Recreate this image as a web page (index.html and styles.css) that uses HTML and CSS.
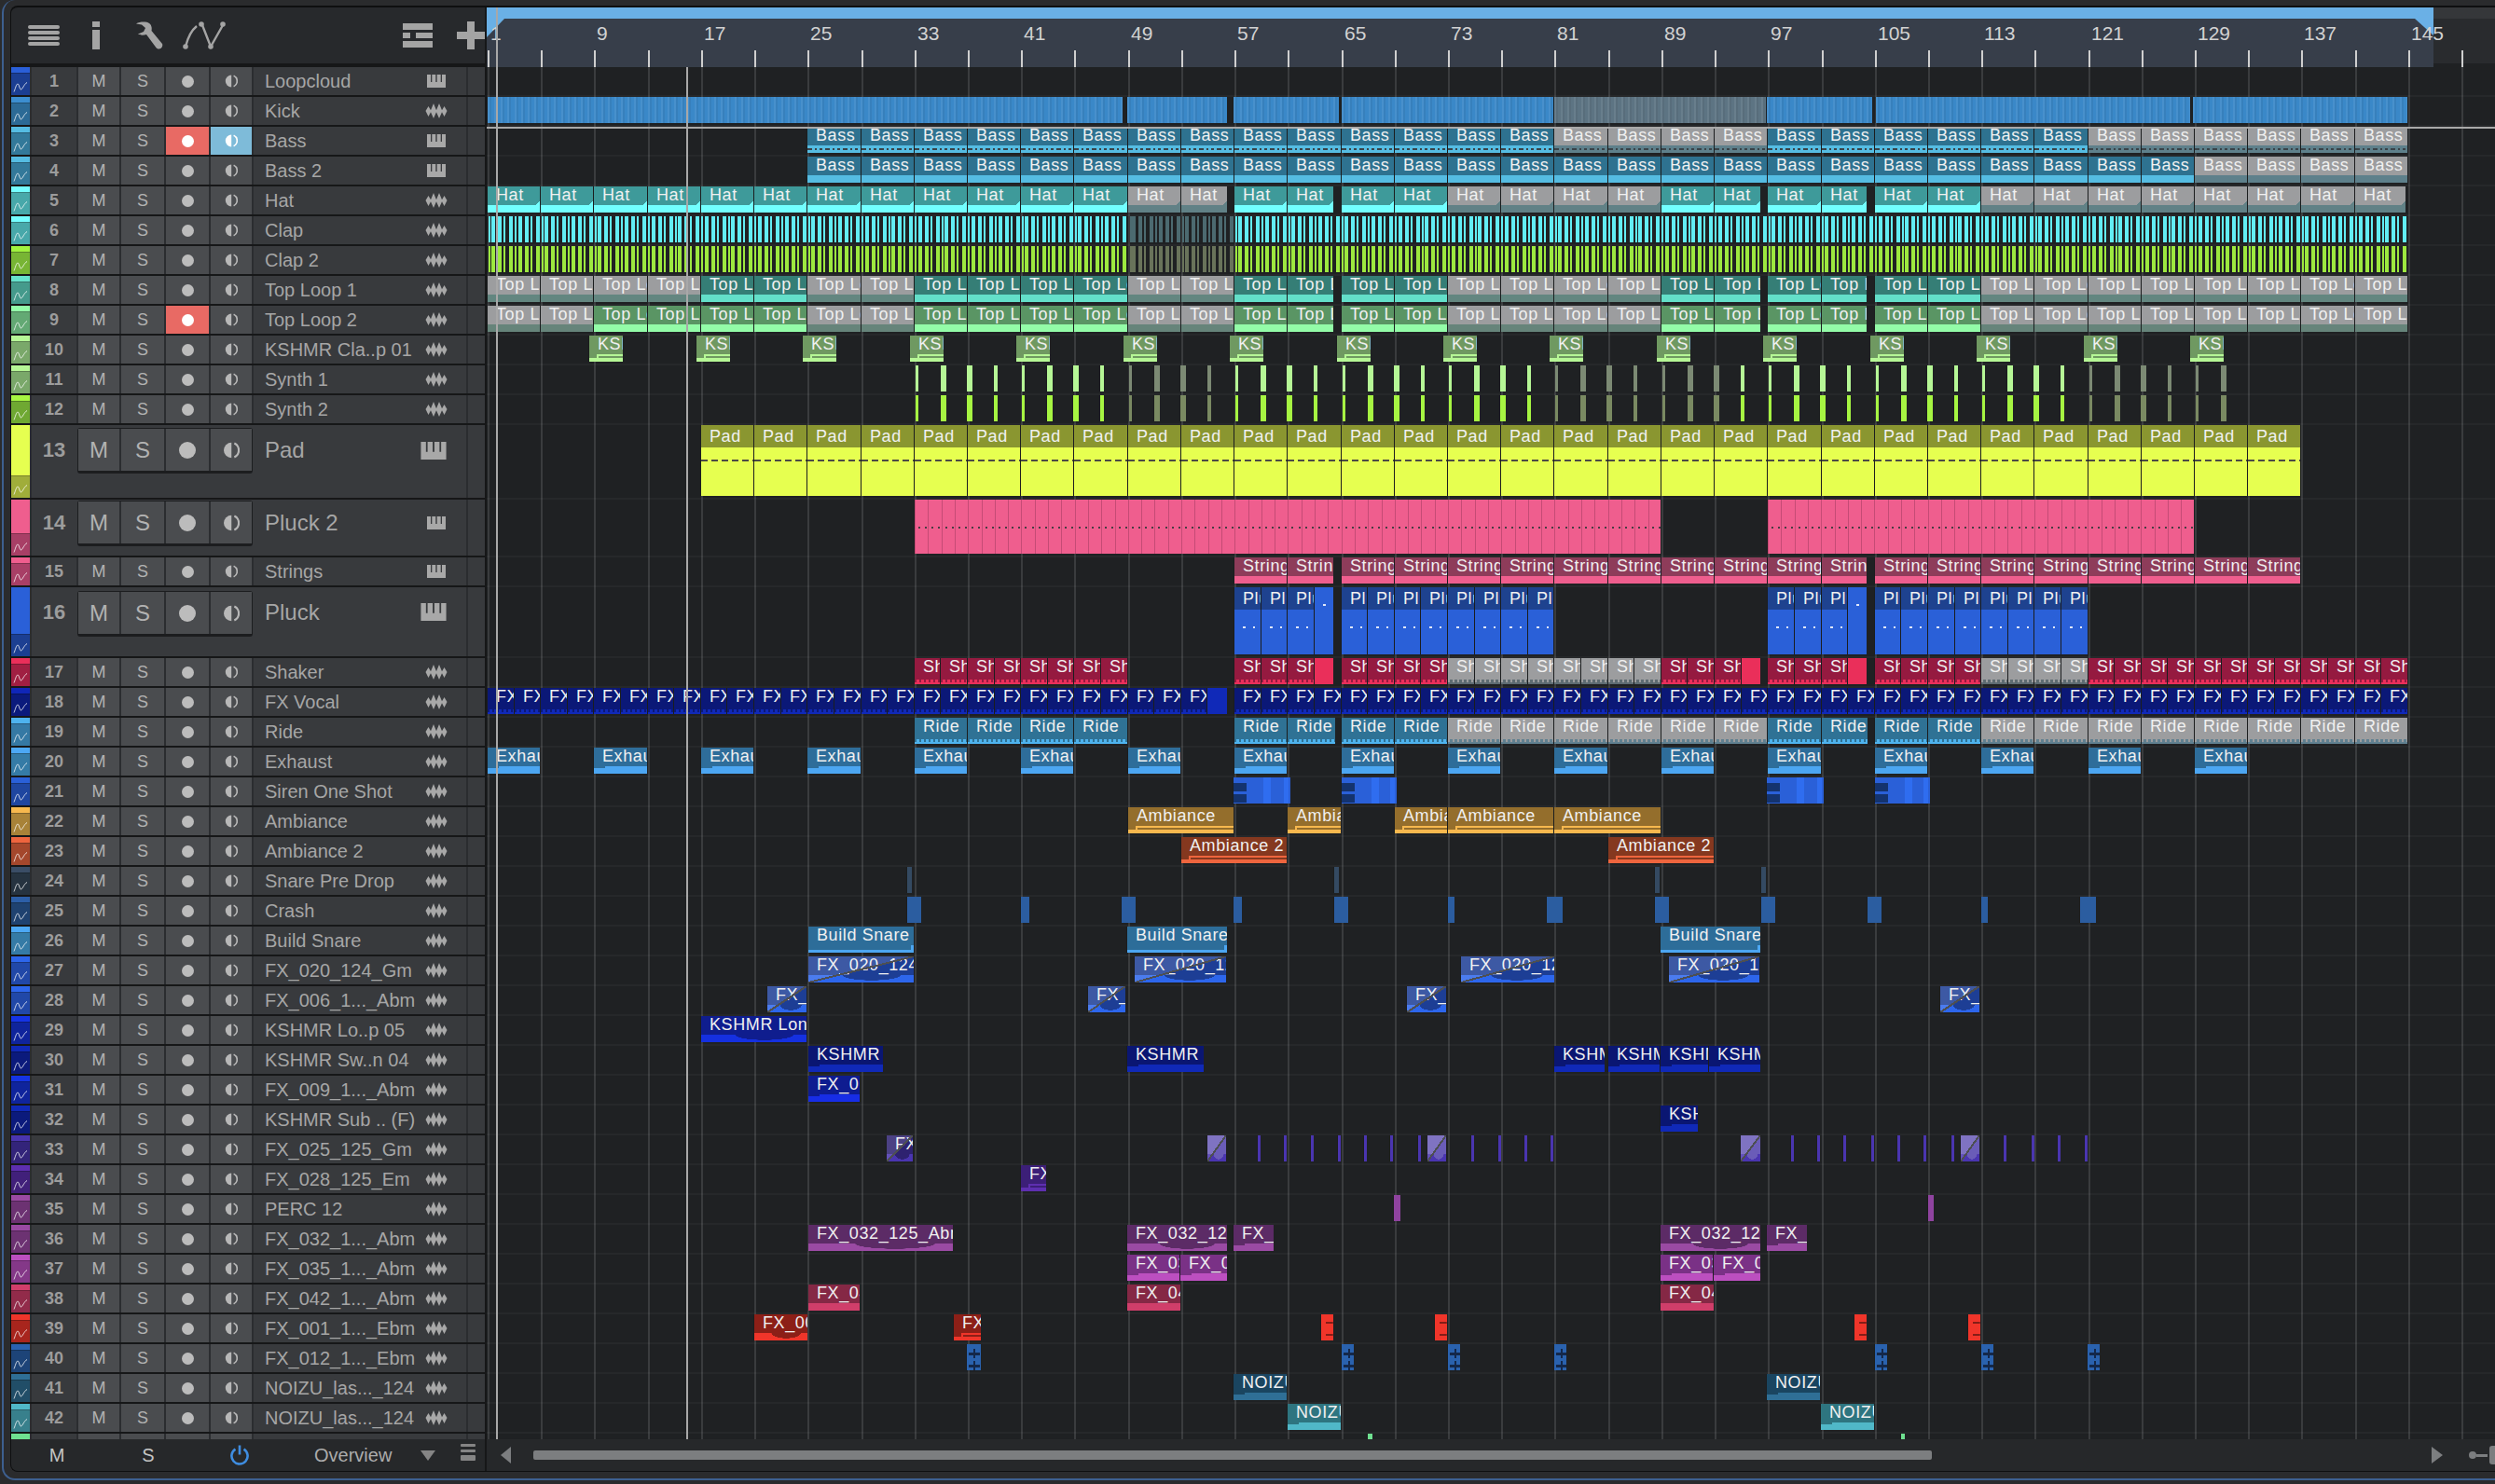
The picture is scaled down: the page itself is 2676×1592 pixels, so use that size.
FILE: index.html
```html
<!DOCTYPE html>
<html lang="en">
<head>
<meta charset="UTF-8">
<title>Arrangement</title>
<link rel="stylesheet" href="styles.css">
</head>
<body>
    <svg class="sprite" width="0" height="0">
        <symbol id="piano" viewBox="0 0 20 14">
            <path d="M0 0h4v8h1.3V0h4v8h1.4V0h4v8H16V0h4v14H0z"/>
        </symbol>
        <symbol id="wave" viewBox="0 0 24 16">
            <path d="M0.5 8L3.5 3L6 7.2L9 0L12 7.2L15 0L18 7.2L20.5 3L23.5 8L20.5 14L18 9.2L15 16L12 9.2L9 16L6 9.2L3.5 14Z"/>
        </symbol>
        <symbol id="zig" viewBox="0 0 16 12">
            <path d="M1 11.5C2.5 8 3.5 3 5 3C6.5 3 7 9 8.5 9C10 9 12 3 15 1.5" fill="none" stroke="currentColor" stroke-width="1"/>
        </symbol>
        <symbol id="monitor" viewBox="0 0 14 14">
            <path d="M7.2 0.6A6.4 6.4 0 0 0 7.2 13.4Z"/>
            <path d="M9.6 1.2A6.4 6.4 0 0 1 9.6 12.8" fill="none" stroke="currentColor" stroke-width="1.7"/>
        </symbol>
    </svg>

    <div class="window">
        <div class="arrange">
            <aside class="track-panel">
                <header class="toolbar">
                    <svg class="tool tool-menu" viewBox="0 0 34 22"><rect y="0" width="34" height="4" rx="2"/><rect y="6" width="34" height="4" rx="2"/><rect y="12" width="34" height="4" rx="2"/><rect y="18" width="34" height="4" rx="2"/></svg>
                    <svg class="tool tool-info" viewBox="0 0 8 30"><rect width="8" height="6"/><rect y="9" width="8" height="21"/></svg>
                    <svg class="tool tool-wrench" viewBox="0 0 30 30"><path d="M1 2.5C5 0 12 0 15 2C18 4 18 8 17.5 10L29 24C30 26 28.5 29.5 25.5 29.5C24 29.5 23 29 22 27.5L12 14C9 15 5 15 3 13.5L9 11L11 7L7 3.5Z"/></svg>
                    <svg class="tool tool-auto" viewBox="0 0 46 30"><path d="M3 27C6 15 10 9 15 5" fill="none" stroke="currentColor" stroke-width="2.4"/><path d="M21 4L30 27L43 4" fill="none" stroke="currentColor" stroke-width="2.4"/><circle cx="3" cy="27" r="2.8"/><circle cx="20" cy="3" r="2.8"/><circle cx="30" cy="27" r="2.8"/><circle cx="43" cy="3" r="2.8"/></svg>
                    <div class="toolbar-right">
                        <svg class="tool tool-list" viewBox="0 0 32 26"><rect width="32" height="7"/><rect y="10" width="8" height="6"/><rect x="14" y="10" width="18" height="6"/><rect y="19" width="32" height="7"/></svg>
                        <svg class="tool tool-plus" viewBox="0 0 30 30"><rect y="11" width="30" height="8"/><rect x="11" width="8" height="30"/></svg>
                    </div>
                </header>
                <div class="track-list" id="trackList"></div>
                <footer class="panel-foot">
                    <span class="foot-cell foot-m">M</span>
                    <span class="foot-cell foot-s">S</span>
                    <span class="foot-cell foot-power">
                        <svg viewBox="0 0 22 22" width="22" height="22"><path d="M6.5 4.6A8.6 8.6 0 1 0 15.5 4.6" fill="none" stroke="#3f8de0" stroke-width="2.6"/><rect x="9.7" y="0.5" width="2.6" height="10" fill="#3f8de0"/></svg>
                    </span>
                    <span class="foot-overview">Overview</span>
                    <span class="foot-arrow"></span>
                    <svg class="foot-list" viewBox="0 0 16 18"><rect width="16" height="3" rx="1"/><rect y="6" width="16" height="3" rx="1"/><rect y="12" width="16" height="6" rx="1"/></svg>
                </footer>
            </aside>

            <main class="timeline">
                <div class="ruler" id="ruler">
                    <div class="loop-range"></div>
                </div>
                <div class="lanes" id="lanes"></div>
                <footer class="scroll-foot">
                    <span class="arrow arrow-left"></span>
                    <div class="scroll-track"><div class="scroll-thumb"></div></div>
                    <span class="arrow arrow-right"></span>
                    <div class="zoom-slider">
                        <span class="zoom-dot"></span>
                        <span class="zoom-line"></span>
                        <span class="zoom-grip"></span>
                        <span class="zoom-line zoom-line-long"></span>
                    </div>
                </footer>
                <div class="locator locator-left"></div>
                <div class="locator locator-right"></div>
            </main>
        </div>
    </div>

    <script src="script.js"></script>
</body>
</html>
```

FILE: styles.css
```css
* {
    box-sizing: border-box;
}

html, body {
    margin: 0;
    padding: 0;
}

body {
    width: 2676px;
    height: 1592px;
    overflow: hidden;
    background-color: #2a2b2d;
    font-family: "Liberation Sans", Arial, sans-serif;
}

.sprite {
    position: absolute;
}

.window {
    height: 1588px;
    margin-left: 2px;
    padding: 6px 0 7px 7px;
    border-left: 2px solid #3d5f8f;
    border-bottom: 2px solid #3d5f8f;
    border-radius: 14px 0 0 14px;
}

.arrange {
    display: grid;
    grid-template-columns: 510px 1fr;
    height: 1573px;
    border: 1px solid #0e0f10;
    border-top-width: 2px;
    border-right: 0;
    border-radius: 8px 0 0 8px;
    background-color: #161718;
    overflow: hidden;
}

/* left panel */
.track-panel {
    display: flex;
    flex-direction: column;
    width: 510px;
    padding-right: 2px;
}

.toolbar {
    display: flex;
    align-items: center;
    flex: none;
    height: 60px;
    margin-bottom: 4px;
    padding-left: 18px;
    background-color: #27292c;
}

.tool {
    display: block;
    flex: none;
    color: #a4a4a4;
    fill: #a4a4a4;
}

.tool-menu { width: 34px; height: 22px; margin-right: 35px; }
.tool-info { width: 8px; height: 30px; margin-right: 38px; }
.tool-wrench { width: 30px; height: 30px; margin-right: 21px; }
.tool-auto { width: 46px; height: 30px; }

.toolbar-right {
    display: flex;
    align-items: center;
    margin-left: auto;
    margin-right: 0;
}

.tool-list { width: 32px; height: 26px; margin-right: 26px; }
.tool-plus { width: 30px; height: 30px; }

.track-list {
    display: flex;
    flex-direction: column;
    gap: 2px;
    flex: none;
    height: 1472px;
    overflow: hidden;
}

.track {
    display: flex;
    gap: 2px;
    flex: none;
    height: 30px;
    background-color: #2b2d30;
    color: #a6a6a6;
}

.track-pad { height: 78px; --bright: 54px; --group-top: 4px; --center: 54px; }
.track-pluck2 { height: 60px; --bright: 36px; --group-top: 2px; --center: 50px; }
.track-pluck { height: 74px; --bright: 50px; --group-top: 5px; --center: 53px; }

.chip {
    display: flex;
    flex-direction: column;
    flex: none;
    width: 20px;
    background-color: var(--chip-dark);
    color: rgba(255, 255, 255, 0.75);
}

.chip-top {
    flex: none;
    height: var(--bright, 6px);
    margin-bottom: 1px;
    background-color: var(--chip-top);
    box-shadow: 0 1px 0 rgba(0, 0, 0, 0.25);
}

.chip svg {
    width: 16px;
    height: 12px;
    margin: auto 0 3px 2px;
}

.track-main {
    display: flex;
    gap: 2px;
    flex: none;
    width: 466px;
}

.track-num {
    display: flex;
    align-items: center;
    justify-content: center;
    flex: none;
    width: 48px;
    background-color: #383a3d;
    font-size: 18px;
    font-weight: bold;
    color: #9c9c9c;
}

.buttons {
    display: flex;
    gap: 2px;
    flex: none;
}

.btn {
    display: flex;
    align-items: center;
    justify-content: center;
    flex: none;
    width: 46px;
    background-color: #4a4c4f;
    font-size: 18px;
    color: #b2b2b2;
}

.btn-m, .btn-mon {
    width: 44px;
}

.btn-mon {
    color: #b8b8b8;
    fill: #b8b8b8;
}

.btn-mon svg {
    width: 14px;
    height: 14px;
}

.rec-dot {
    width: 13px;
    height: 13px;
    border-radius: 50%;
    background-color: #bcbcbc;
}

.btn-rec.on {
    background-color: #e86a64;
}

.btn-rec.on .rec-dot {
    background-color: #fff;
}

.btn-mon.on {
    background-color: #7ebbd9;
    color: #fff;
    fill: #fff;
}

.track-name {
    display: flex;
    align-items: center;
    flex: none;
    width: 228px;
    padding: 0 20px 0 12px;
    background-color: #383a3d;
    font-size: 20px;
    white-space: nowrap;
    overflow: hidden;
}

.track-name svg {
    flex: none;
    margin-left: auto;
    fill: #a8a8a8;
}

.icon-piano { width: 20px; height: 14px; margin-right: 2px; }
.icon-wave { width: 24px; height: 16px; }
.icon-piano-big { width: 34px; height: 19px; margin-right: -2px; }

.track-tail {
    flex: none;
    width: 18px;
    background-color: #383a3d;
}

/* tall tracks: numbers, buttons and name sit on one surface */
.track-tall .track-main {
    background-color: #383a3d;
    align-items: flex-start;
}

.track-tall .track-num,
.track-tall .track-name {
    height: var(--center);
}

.track-tall .track-num {
    font-size: 22px;
}

.track-tall .track-name {
    font-size: 24px;
}

.track-tall .buttons {
    height: 45px;
    margin-top: var(--group-top);
    border-radius: 2px;
    box-shadow: 0 0 0 1px #1c1d1f, 0 2px 0 1px #1c1d1f;
    background-color: #2b2d30;
}

.track-tall .btn {
    font-size: 24px;
}

.track-tall .rec-dot {
    width: 18px;
    height: 18px;
}

.track-tall .btn-mon svg {
    width: 18px;
    height: 18px;
}

.panel-foot {
    display: flex;
    align-items: center;
    flex: none;
    height: 34px;
    background-color: #26282a;
    color: #c4c4c4;
    font-size: 20px;
}

.foot-cell {
    display: flex;
    justify-content: center;
    flex: none;
    width: 98px;
}

.foot-m { margin-right: 0; }
.foot-s { width: 98px; }
.foot-power { width: 98px; }

.foot-overview {
    flex: none;
    margin-left: 31px;
    color: #acacac;
}

.foot-arrow {
    flex: none;
    width: 0;
    height: 0;
    margin-left: 31px;
    border-left: 8px solid transparent;
    border-right: 8px solid transparent;
    border-top: 11px solid #858585;
}

.foot-list {
    flex: none;
    width: 16px;
    height: 18px;
    margin: -6px 0 0 27px;
    fill: #858585;
}

/* timeline */
.timeline {
    position: relative;
    display: flex;
    flex-direction: column;
    min-width: 0;
}

.ruler {
    position: relative;
    flex: none;
    height: 64px;
    background: linear-gradient(#35373a 0 12px, #292b2e 12px 60px, #1f2123 60px);
    color: #d2d2d2;
    font-size: 21px;
}

.loop-range {
    position: absolute;
    left: 0;
    top: 0;
    bottom: 0;
    width: 2088px;
    border-top: 12px solid #6ab0e6;
    background-color: #373e4a;
}

.loop-range::before,
.loop-range::after {
    content: "";
    position: absolute;
    top: 0;
    background-color: #6ab0e6;
}

.loop-range::before {
    left: 0;
    width: 19px;
    height: 20px;
    clip-path: polygon(0 0, 100% 0, 0 100%);
}

.loop-range::after {
    right: 0;
    width: 20px;
    height: 18px;
    clip-path: polygon(0 0, 100% 0, 100% 100%);
}

.ruler-label {
    position: absolute;
    top: 16px;
    line-height: 24px;
}

.ruler-tick {
    position: absolute;
    top: 46px;
    width: 2px;
    height: 18px;
    background-color: #cfcfcf;
}

.lanes {
    position: relative;
    flex: none;
    height: 1472px;
    overflow: hidden;
    background-color: #1f2123;
}

.grid-line {
    position: absolute;
    top: 0;
    bottom: 0;
    width: 2px;
    background-color: #3a3c3e;
}

.lane {
    position: relative;
    height: 32px;
    border-bottom: 2px solid rgba(255, 255, 255, 0.035);
}

.lane-pad { height: 80px; }
.lane-pluck2 { height: 62px; }
.lane-pluck { height: 76px; }

.insert-line {
    position: absolute;
    left: 0;
    right: 0;
    top: 64px;
    height: 2px;
    background-color: #a9a9a9;
}

.locator {
    position: absolute;
    width: 2px;
    bottom: 34px;
    background-color: #a8a8a8;
    z-index: 5;
}

.locator-left { left: 10px; top: 0; }
.locator-right { left: 214px; top: 64px; }

/* clips */
.clip {
    position: absolute;
    top: 0;
    bottom: 2px;
    display: flex;
    flex-direction: column;
    overflow: hidden;
    border-left: 1px solid rgba(0, 0, 0, 0.12);
    color: #f0f0f0;
}

.clip-head {
    flex: none;
    height: 20px;
    padding-left: 9px;
    background-color: var(--head);
    font-size: 18px;
    line-height: 18px;
    letter-spacing: 0.6px;
    white-space: nowrap;
    overflow: hidden;
}

.lane-pad .clip-head,
.lane-pluck .clip-head {
    height: 24px;
    line-height: 24px;
}

.clip-body {
    position: relative;
    flex: 1;
    background-color: var(--body);
}

.clip-bare .clip-head {
    display: none;
}

.clip-note {
    position: absolute;
    top: 0;
    bottom: 2px;
    background-color: var(--body);
}

/* what is drawn inside a clip */
.kick .clip-body {
    background-image: repeating-linear-gradient(90deg, rgba(255, 255, 255, 0.07) 0 2px, rgba(0, 0, 0, 0.06) 2px 4px, transparent 4px 7.15px);
}

.bars .clip-body {
    background-color: transparent;
    background-image: repeating-linear-gradient(90deg, var(--body) 0 4px, transparent 4px 7px, var(--body) 7px 11px, transparent 11px 13px, var(--body) 13px 15px, transparent 15px 19px, var(--body) 19px 23px, transparent 23px 25px, var(--body) 25px 27px, transparent 27px 28.61px);
    background-position: 4px 0;
}

.hat .clip-head {
    background-image: linear-gradient(-45deg, var(--body) 0 3px, transparent 3px);
}

.wave-dash .clip-body {
    background-image: repeating-linear-gradient(90deg, #3a4248 0 5px, transparent 5px 8px, #3a4248 8px 10px, transparent 10px 13px, #3a4248 13px 16px, transparent 16px 19px);
    background-size: 100% 2px;
    background-position: 0 3px;
    background-repeat: no-repeat;
}

.wave-pad .clip-body {
    background-image: repeating-linear-gradient(90deg, #4b4b44 0 7px, transparent 7px 11px);
    background-size: 100% 2px;
    background-position: 0 13px;
    background-repeat: no-repeat;
}

.wave-dots .clip-body {
    background-image:
        repeating-linear-gradient(90deg, #4a3d43 0 2px, transparent 2px 7.15px),
        repeating-linear-gradient(90deg, rgba(100, 30, 60, 0.3) 0 1px, transparent 1px 14.3px);
    background-size: 100% 2px, 100% 100%;
    background-position: 4px 29px, 0 0;
    background-repeat: no-repeat;
}

.wave-white .clip-body {
    background-image: repeating-linear-gradient(90deg, rgba(255, 255, 255, 0.85) 0 3px, transparent 3px 11px, rgba(255, 255, 255, 0.85) 11px 13px, transparent 13px 22px);
    background-size: 100% 2px;
    background-position: 9px 18px;
    background-repeat: no-repeat;
}

.wave-teeth .clip-body {
    background-image:
        linear-gradient(var(--head), var(--head)),
        repeating-linear-gradient(90deg, var(--head) 0 2px, transparent 2px 5px);
    background-size: 100% 3px, 100% 3px;
    background-position: 0 0, 0 3px;
    background-repeat: no-repeat;
}

.wave-band .clip-body {
    background-image: linear-gradient(var(--head), var(--head));
    background-size: calc(100% - 3px) 5px;
    background-repeat: no-repeat;
}

.wave-line .clip-body {
    background-image:
        linear-gradient(var(--head), var(--head)),
        linear-gradient(var(--head), var(--head));
    background-size: 8px 4px, 100% 2px;
    background-position: 0 0, 10px 2px;
    background-repeat: no-repeat;
}

.wave-hump .clip-body {
    background-image: radial-gradient(ellipse 34% 100% at 60% 0, var(--head) 0 80%, transparent 82%);
    background-size: 100% 7px;
    background-repeat: no-repeat;
}

.wave-corner .clip-body {
    background-image: linear-gradient(var(--head), var(--head));
    background-size: 12px 2px;
    background-repeat: no-repeat;
}

.wave-steps .clip-body {
    background-image:
        linear-gradient(rgba(0, 0, 0, 0.45), rgba(0, 0, 0, 0.45)),
        linear-gradient(rgba(0, 0, 0, 0.45), rgba(0, 0, 0, 0.45));
    background-size: 60% 2px, 60% 2px;
    background-position: 100% 8px, 100% 21px;
    background-repeat: no-repeat;
}

.wave-tree .clip-body {
    background-image:
        linear-gradient(#14284a, #14284a),
        linear-gradient(#14284a, #14284a),
        linear-gradient(#14284a, #14284a),
        linear-gradient(#14284a, #14284a);
    background-size: 2px 10px, 12px 3px, 2px 10px, 12px 3px;
    background-position: 7px 5px, 2px 9px, 7px 18px, 2px 22px;
    background-repeat: no-repeat;
}

.siren .clip-body {
    background-image:
        linear-gradient(#14336e, #14336e),
        linear-gradient(#14336e, #14336e),
        linear-gradient(#2f6df0, #2f6df0),
        linear-gradient(#2f6df0, #2f6df0);
    background-size: 14px 9px, 14px 9px, 8px 100%, 5px 100%;
    background-position: 0 6px, 0 18px, 32px 0, calc(100% - 2px) 0;
    background-repeat: no-repeat;
}

.fade::after {
    content: "";
    position: absolute;
    inset: 0;
    background: linear-gradient(to bottom right, rgba(255, 255, 255, 0.14) 0 calc(50% - 1px), #4d4f52 calc(50% - 1px) calc(50% + 1px), transparent calc(50% + 1px));
}

/* footer of the timeline */
.scroll-foot {
    display: flex;
    align-items: center;
    flex: none;
    height: 34px;
    padding-left: 15px;
    background-color: #26282a;
}

.arrow {
    flex: none;
    width: 0;
    height: 0;
    border-top: 9px solid transparent;
    border-bottom: 9px solid transparent;
}

.arrow-left {
    border-right: 11px solid #7c7e80;
}

.arrow-right {
    margin-left: 6px;
    border-left: 12px solid #7c7e80;
}

.scroll-track {
    flex: none;
    width: 2030px;
    margin-left: 24px;
}

.scroll-thumb {
    width: 1500px;
    height: 10px;
    border-radius: 2px;
    background-color: #7c7e80;
}

.zoom-slider {
    display: flex;
    align-items: center;
    flex: none;
    margin-left: 28px;
}

.zoom-dot {
    flex: none;
    width: 8px;
    height: 8px;
    border-radius: 50%;
    background-color: #7c7e80;
}

.zoom-line {
    flex: none;
    width: 12px;
    height: 3px;
    background-color: #7c7e80;
}

.zoom-line-long {
    width: 30px;
}

.zoom-grip {
    flex: none;
    width: 8px;
    height: 20px;
    margin: 0 2px;
    border-radius: 3px;
    background-color: #7c7e80;
}
```

FILE: script.js
```js
const SLOT = 57.22; // 4 bars
const LEFT = 522;
const s = k => LEFT + Math.round(k * SLOT);

const PIANO = 'piano', WAVE = 'wave';

const tracks = [
    { name: 'Loopcloud', icon: PIANO, top: '#2a5fd8', dark: '#1b3e92' },
    { name: 'Kick', icon: WAVE, top: '#3c8ed0', dark: '#2c6a96', body: '#3a88c8', mbody: '#5d7483' },
    { name: 'Bass', icon: PIANO, top: '#55bce2', dark: '#33799a', head: '#2e7290', body: '#55bce2', mbody: '#5e808b', rec: true, mon: true },
    { name: 'Bass 2', icon: PIANO, top: '#55bce2', dark: '#33799a', head: '#2e7290', body: '#55bce2', mbody: '#5e808b' },
    { name: 'Hat', icon: WAVE, top: '#74fdff', dark: '#48a8aa', head: '#3e9a9a', body: '#72ffff', mbody: '#618186' },
    { name: 'Clap', icon: WAVE, top: '#74fdff', dark: '#48a8aa', body: '#62edf4', mbody: '#4c6a70' },
    { name: 'Clap 2', icon: WAVE, top: '#a1f23f', dark: '#78b534', body: '#9de83f', mbody: '#69735a' },
    { name: 'Top Loop 1', icon: WAVE, top: '#66e2cc', dark: '#459a8c', head: '#357e76', body: '#63dfc9', mbody: '#638680' },
    { name: 'Top Loop 2', icon: WAVE, top: '#93fca8', dark: '#63a974', head: '#5a9564', body: '#93fca8', mbody: '#66847a', rec: true },
    { name: 'KSHMR Cla..p 01', icon: WAVE, top: '#b6f796', dark: '#7aa86a', head: '#6f9961', body: '#b6f796' },
    { name: 'Synth 1', icon: WAVE, top: '#b6f796', dark: '#7aa86a', body: '#b6f796', mbody: '#7c8a74' },
    { name: 'Synth 2', icon: WAVE, top: '#a6f542', dark: '#6fa832', body: '#a6f542', mbody: '#7a8a62' },
    { name: 'Pad', icon: 'piano-big', top: '#e6ff50', dark: '#a0ad3a', head: '#8a9630', body: '#e6ff50', tall: 'pad' },
    { name: 'Pluck 2', icon: PIANO, top: '#ef5e8e', dark: '#a83f66', body: '#ef5e8e', tall: 'pluck2' },
    { name: 'Strings', icon: PIANO, top: '#ef5e8e', dark: '#a83f66', head: '#8e3c5a', body: '#ef5e8e' },
    { name: 'Pluck', icon: 'piano-big', top: '#2a60d8', dark: '#1c3f92', head: '#1e428f', body: '#2a60d8', tall: 'pluck' },
    { name: 'Shaker', icon: WAVE, top: '#ea2f5a', dark: '#a01f42', head: '#951a40', body: '#ea2f5a', mbody: '#5e6c72' },
    { name: 'FX Vocal', icon: WAVE, top: '#1026b8', dark: '#0b1a7c', head: '#0b1877', body: '#1029b8' },
    { name: 'Ride', icon: WAVE, top: '#4eb3ee', dark: '#3579a4', head: '#2f7295', body: '#4eb3ee', mbody: '#608090' },
    { name: 'Exhaust', icon: WAVE, top: '#4ca8f5', dark: '#357ba6', head: '#2e6d9a', body: '#4ca6f2' },
    { name: 'Siren One Shot', icon: WAVE, top: '#2a60d8', dark: '#1f46a0', body: '#2a60d8' },
    { name: 'Ambiance', icon: WAVE, top: '#f7b84e', dark: '#a88238', head: '#946e2c', body: '#f7b84e' },
    { name: 'Ambiance 2', icon: WAVE, top: '#ee653e', dark: '#a4472c', head: '#85381f', body: '#ee653e' },
    { name: 'Snare Pre Drop', icon: WAVE, top: '#3a4d66', dark: '#263340', body: '#344a62' },
    { name: 'Crash', icon: WAVE, top: '#2c5fa8', dark: '#1f4270', body: '#2b5da0' },
    { name: 'Build Snare', icon: WAVE, top: '#4ca8f5', dark: '#357ba6', head: '#2d6d99', body: '#4ca6f2' },
    { name: 'FX_020_124_Gm', icon: WAVE, top: '#2d66ec', dark: '#2148a8', head: '#1d3e95', body: '#2d66ec' },
    { name: 'FX_006_1..._Abm', icon: WAVE, top: '#2d66ec', dark: '#2148a8', head: '#1d3e95', body: '#2d66ec' },
    { name: 'KSHMR Lo..p 05', icon: WAVE, top: '#1534e6', dark: '#0f249c', head: '#0f1d8e', body: '#1530e0' },
    { name: 'KSHMR Sw..n 04', icon: WAVE, top: '#1029b8', dark: '#0b1a7c', head: '#0a1672', body: '#1029b8' },
    { name: 'FX_009_1..._Abm', icon: WAVE, top: '#1534e6', dark: '#0f249c', head: '#0e1c90', body: '#172de6' },
    { name: 'KSHMR Sub .. (F)', icon: WAVE, top: '#1029b8', dark: '#0b1a7c', head: '#0a1672', body: '#1029b8' },
    { name: 'FX_025_125_Gm', icon: WAVE, top: '#4a35b0', dark: '#33247a', head: '#2e2270', body: '#4a35b0' },
    { name: 'FX_028_125_Em', icon: WAVE, top: '#5e2fb0', dark: '#41207a', head: '#3c1f78', body: '#5e2fb0' },
    { name: 'PERC 12', icon: WAVE, top: '#9a4aa3', dark: '#6c3272', body: '#8f439f' },
    { name: 'FX_032_1..._Abm', icon: WAVE, top: '#9a4aa3', dark: '#6c3272', head: '#5c2b66', body: '#9a4aa3' },
    { name: 'FX_035_1..._Abm', icon: WAVE, top: '#bc4fc0', dark: '#843888', head: '#7a3186', body: '#bc4fc0' },
    { name: 'FX_042_1..._Abm', icon: WAVE, top: '#d03e6a', dark: '#922b4a', head: '#852845', body: '#d03e6a' },
    { name: 'FX_001_1..._Ebm', icon: WAVE, top: '#f0352a', dark: '#a8251d', head: '#8c1f17', body: '#f0352a' },
    { name: 'FX_012_1..._Ebm', icon: WAVE, top: '#2a62ae', dark: '#1d4478', body: '#2a62ae' },
    { name: 'NOIZU_las..._124', icon: WAVE, top: '#2f6f96', dark: '#214e68', head: '#1a4560', body: '#2f6f96' },
    { name: 'NOIZU_las..._124', icon: WAVE, top: '#50b8c8', dark: '#38808c', head: '#2e7580', body: '#50b8c8' },
    { name: '', icon: '', top: '#6fe090', dark: '#4d9c66', body: '#6fe090' }
];

// track list
const trackList = document.getElementById('trackList');

function iconFor(icon) {
    if (!icon) return '';
    const id = icon === 'piano-big' ? 'piano' : icon;
    return `<svg class="icon-${icon}"><use href="#${id}"></use></svg>`;
}

tracks.forEach((t, i) => {
    const row = document.createElement('div');
    row.className = 'track' + (t.tall ? ` track-tall track-${t.tall}` : '');
    const hasLabel = t.name !== '';
    row.innerHTML = `
        <div class="chip" style="--chip-top:${t.top};--chip-dark:${t.dark}">
            <div class="chip-top"></div>
            <svg><use href="#zig"></use></svg>
        </div>
        <div class="track-main">
            <div class="track-num">${hasLabel ? i + 1 : ''}</div>
            <div class="buttons">
                <div class="btn btn-m">${hasLabel ? 'M' : ''}</div>
                <div class="btn btn-s">${hasLabel ? 'S' : ''}</div>
                <div class="btn btn-rec${t.rec ? ' on' : ''}"><div class="rec-dot"></div></div>
                <div class="btn btn-mon${t.mon ? ' on' : ''}"><svg><use href="#monitor"></use></svg></div>
            </div>
            <div class="track-name">${t.name}${iconFor(t.icon)}</div>
        </div>
        <div class="track-tail"></div>`;
    trackList.appendChild(row);
});

// ruler
const ruler = document.getElementById('ruler');
for (let k = 0; k <= 37; k++) {
    const x = Math.round(k * SLOT) + 1;
    const tick = document.createElement('div');
    tick.className = 'ruler-tick';
    tick.style.left = x + 'px';
    ruler.appendChild(tick);
    if (k % 2 === 0) {
        const label = document.createElement('div');
        label.className = 'ruler-label';
        label.style.left = (x + 3) + 'px';
        label.textContent = 1 + k * 4;
        ruler.appendChild(label);
    }
}

// clips, lane number -> list
const laneClips = {};
const clip = (n, x1, x2, o = {}) => {
    (laneClips[n] = laneClips[n] || []).push({ x1, x2, ...o });
};
const run = (n, a, b, o = {}, step = 1, end) => {
    for (let k = a; k < b - 0.01; k += step) {
        const last = k + step >= b - 0.01;
        clip(n, s(k), last && end ? end : s(k + step), o);
    }
};

const M = { muted: true };

clip(2, 522, 1204, { cls: 'kick', bare: true });
clip(2, 1208, 1316, { cls: 'kick', bare: true });
clip(2, 1322, 1436, { cls: 'kick', bare: true });
clip(2, 1438, 1666, { cls: 'kick', bare: true });
clip(2, 1666, 1894, { cls: 'kick', bare: true, muted: true });
clip(2, 1894, 2008, { cls: 'kick', bare: true });
clip(2, 2011, 2349, { cls: 'kick', bare: true });
clip(2, 2351, 2582, { cls: 'kick', bare: true });

const bass = { label: 'Bass', cls: 'wave-dash' };
run(3, 6, 20, bass);
run(3, 20, 24, { ...bass, ...M });
run(3, 24, 30, bass);
run(3, 30, 36, { ...bass, ...M });

run(4, 6, 32, { label: 'Bass' });
run(4, 32, 36, { label: 'Bass', ...M });

const hat = { label: 'Hat', cls: 'hat' };
run(5, 0, 12, hat);
run(5, 12, 14, { ...hat, ...M }, 1, 1316);
run(5, 14, 16, hat, 1, 1430);
run(5, 16, 18, hat);
run(5, 18, 22, { ...hat, ...M });
run(5, 22, 24, hat, 1, 1888);
run(5, 24, 26, hat, 1, 2002);
run(5, 26, 28, hat);
run(5, 28, 36, { ...hat, ...M }, 1, 2580);

[6, 7].forEach(n => {
    clip(n, s(0), s(12), { cls: 'bars', bare: true });
    clip(n, s(12), s(14), { cls: 'bars', bare: true, muted: true });
    clip(n, s(14), s(36), { cls: 'bars', bare: true });
});

[[8, 'Top Loop 1', 4, 6], [9, 'Top Loop 2', 2, 6]].forEach(([n, label, a, b]) => {
    const o = { label };
    run(n, 0, a, { ...o, ...M });
    run(n, a, b, n === 8 ? o : o);
    if (n === 8) run(n, 6, 8, { ...o, ...M });
    else run(n, 6, 8, { ...o, ...M });
    run(n, 8, 12, o);
    run(n, 12, 14, { ...o, ...M });
    run(n, 14, 16, o, 1, 1430);
    run(n, 16, 18, o);
    run(n, 18, 22, { ...o, ...M });
    run(n, 22, 24, o, 1, 1888);
    run(n, 24, 26, o, 1, 2002);
    run(n, 26, 28, o);
    run(n, 28, 36, { ...o, ...M });
});

for (let k = 2; k <= 32; k += 2) {
    clip(10, s(k) - 5, s(k) + 32, { label: 'KSHMR Clap', cls: 'wave-line' });
}

// short stabs of the two synths
for (let k = 8; k < 34; k += 2) {
    [[0, 4], [27, 7], [55, 7], [84, 5]].forEach(([off, w]) => {
        const x = s(k) + 1 + off;
        if (x > 2390) return;
        const muted = (x >= 1208 && x < 1322) || (x >= 1666 && x < 1866) || x >= 2238;
        clip(11, x, x + w, { bare: true, muted });
        clip(12, x, x + w, { bare: true, muted });
    });
}

run(13, 4, 34, { label: 'Pad', cls: 'wave-pad' });

clip(14, s(8), s(22), { bare: true, cls: 'wave-dots' });
clip(14, s(24), s(32), { bare: true, cls: 'wave-dots' });

const str = { label: 'Strings' };
run(15, 14, 16, str, 1, 1430);
run(15, 16, 26, str, 1, 2002);
run(15, 26, 34, str);

const pl = { label: 'Pluck', cls: 'wave-white' };
run(16, 14, 15.5, pl, 0.5);
clip(16, s(15.5), 1430, { bare: true, cls: 'wave-white' });
run(16, 16, 20, pl, 0.5);
run(16, 24, 25.5, pl, 0.5);
clip(16, s(25.5), 2002, { bare: true, cls: 'wave-white' });
run(16, 26, 30, pl, 0.5);

const sh = { label: 'Shaker', cls: 'wave-teeth' };
const shEnd = { label: '', head: '#ea2f5a', cls: 'wave-teeth' };
run(17, 8, 12, sh, 0.5);
run(17, 14, 15.5, sh, 0.5);
clip(17, s(15.5), 1430, shEnd);
run(17, 16, 18, sh, 0.5);
run(17, 18, 22, { ...sh, ...M }, 0.5);
run(17, 22, 23.5, sh, 0.5);
clip(17, s(23.5), 1888, shEnd);
run(17, 24, 25.5, sh, 0.5);
clip(17, s(25.5), 2002, shEnd);
run(17, 26, 28, sh, 0.5);
run(17, 28, 30, { ...sh, ...M }, 0.5);
run(17, 30, 36, sh, 0.5);

const fxv = { label: 'FX Vocal', cls: 'wave-teeth' };
run(18, 0, 13.5, fxv, 0.5);
clip(18, s(13.5), 1316, { label: '', head: '#1029b8', cls: 'wave-teeth' });
run(18, 14, 36, fxv, 0.5);

const ride = { label: 'Ride', cls: 'wave-teeth' };
run(19, 8, 12, ride);
run(19, 14, 16, ride, 1, 1432);
run(19, 16, 18, ride);
run(19, 18, 24, { ...ride, ...M });
run(19, 24, 26, ride, 1, 2003);
run(19, 26, 28, ride);
run(19, 28, 36, { ...ride, ...M });

for (let k = 0; k <= 32; k += 2) {
    clip(20, s(k), s(k + 1), { label: 'Exhaust', cls: 'wave-corner' });
}

[[1322, 1384], [1438, 1498], [1894, 1956], [2010, 2070]].forEach(([a, b]) => {
    clip(21, a, b, { bare: true, cls: 'siren' });
});

const amb = { label: 'Ambiance', cls: 'wave-line' };
clip(22, s(12), s(14), amb);
clip(22, s(15), s(16), amb);
clip(22, s(17), s(18), amb);
clip(22, s(18), s(20), amb);
clip(22, s(20), s(22), amb);

clip(23, s(13), s(15), { label: 'Ambiance 2', cls: 'wave-line' });
clip(23, s(21), s(23), { label: 'Ambiance 2', cls: 'wave-line' });

[[972, 978], [1430, 1436], [1774, 1780], [1888, 1894]].forEach(([a, b]) => clip(24, a, b, { bare: true }));

[[972, 988], [1094, 1104], [1202, 1218], [1322, 1332], [1430, 1446], [1552, 1560], [1658, 1676],
    [1774, 1790], [1888, 1904], [2002, 2018], [2124, 2132], [2230, 2248]].forEach(([a, b]) => clip(25, a, b, { bare: true }));

[[866, 980], [1208, 1316], [1780, 1888]].forEach(([a, b]) => clip(26, a, b, { label: 'Build Snare', cls: 'wave-band' }));

[[866, 980], [1216, 1315], [1566, 1667], [1789, 1887]].forEach(([a, b]) => clip(27, a, b, { label: 'FX_020_124_Gm', cls: 'fade wave-hump' }));
[[822, 865], [1166, 1207], [1508, 1551], [2080, 2123]].forEach(([a, b]) => clip(28, a, b, { label: 'FX_006_125_Abm', cls: 'fade wave-hump' }));

clip(29, 751, 865, { label: 'KSHMR Long', cls: 'wave-hump' });

[[866, 947], [1208, 1291], [1666, 1721], [1724, 1780], [1780, 1832], [1832, 1888]].forEach(([a, b]) => {
    clip(30, a, b, { label: 'KSHMR Sweep', cls: 'wave-corner' });
});

clip(31, 866, 922, { label: 'FX_009_125', cls: 'wave-corner' });
clip(32, 1780, 1821, { label: 'KSHMR Sub', cls: 'wave-corner' });

clip(33, 950, 979, { label: 'FX', cls: 'fade wave-hump' });
[[1294, 1315], [1530, 1551], [1866, 1888], [2102, 2123]].forEach(([a, b]) => {
    clip(33, a, b, { label: '', head: '#6a5cb8', cls: 'fade wave-hump' });
});
[1348, 1376, 1405, 1434, 1462, 1490, 1520, 1577, 1606, 1634, 1662, 1920, 1948, 1976, 2006, 2034, 2062, 2092, 2148, 2178, 2206, 2235]
    .forEach(x => clip(33, x, x + 4, { bare: true }));

clip(34, 1094, 1122, { label: 'FX', cls: 'wave-line' });

clip(35, 1494, 1502, { bare: true });
clip(35, 2067, 2074, { bare: true });

clip(36, 866, 1022, { label: 'FX_032_125_Abm', cls: 'wave-hump' });
clip(36, 1208, 1316, { label: 'FX_032_125_Abm', cls: 'wave-hump' });
clip(36, 1322, 1366, { label: 'FX_032', cls: 'wave-corner' });
clip(36, 1780, 1888, { label: 'FX_032_125_Abm', cls: 'wave-hump' });
clip(36, 1894, 1938, { label: 'FX_032', cls: 'wave-corner' });

[[1208, 1265], [1265, 1316], [1780, 1837], [1837, 1888]].forEach(([a, b]) => clip(37, a, b, { label: 'FX_035', cls: 'wave-corner' }));

clip(38, 866, 922, { label: 'FX_042', cls: '' });
clip(38, 1208, 1266, { label: 'FX_042', cls: '' });
clip(38, 1780, 1838, { label: 'FX_042', cls: '' });

clip(39, 808, 866, { label: 'FX_001', cls: 'wave-hump' });
clip(39, 1022, 1052, { label: 'FX_001', cls: 'wave-line' });
[[1416, 1430], [1538, 1552], [1988, 2002], [2110, 2124]].forEach(([a, b]) => clip(39, a, b, { bare: true, cls: 'wave-steps' }));

[[1036, 1052], [1438, 1452], [1552, 1566], [1666, 1680], [2010, 2024], [2124, 2138], [2238, 2252]].forEach(([a, b]) => {
    clip(40, a, b, { bare: true, cls: 'wave-tree' });
});

clip(41, 1322, 1380, { label: 'NOIZU', cls: 'wave-corner' });
clip(41, 1894, 1952, { label: 'NOIZU', cls: 'wave-corner' });
clip(42, 1380, 1438, { label: 'NOIZU', cls: 'wave-corner' });
clip(42, 1952, 2010, { label: 'NOIZU', cls: 'wave-corner' });

clip(43, 1466, 1472, { bare: true });
clip(43, 2038, 2043, { bare: true });

// lanes
const lanes = document.getElementById('lanes');

for (let k = 0; k <= 37; k++) {
    const line = document.createElement('div');
    line.className = 'grid-line';
    line.style.left = (Math.round(k * SLOT) + 1) + 'px';
    lanes.appendChild(line);
}

tracks.forEach((t, i) => {
    const lane = document.createElement('div');
    lane.className = 'lane' + (t.tall ? ` lane-${t.tall}` : '');
    (laneClips[i + 1] || []).forEach(c => {
        const el = document.createElement('div');
        el.className = 'clip' + (c.bare ? ' clip-bare' : '') + (c.cls ? ' ' + c.cls : '');
        el.style.left = (c.x1 - LEFT) + 'px';
        el.style.width = (c.x2 - c.x1) + 'px';
        const head = c.muted ? '#9c9d9f' : (c.head || t.head || t.body);
        const body = c.muted ? t.mbody : t.body;
        el.style.setProperty('--head', head);
        el.style.setProperty('--body', body);
        const headEl = document.createElement('div');
        headEl.className = 'clip-head';
        headEl.textContent = c.label || '';
        const bodyEl = document.createElement('div');
        bodyEl.className = 'clip-body';
        el.append(headEl, bodyEl);
        lane.appendChild(el);
    });
    lanes.appendChild(lane);
});

const insert = document.createElement('div');
insert.className = 'insert-line';
lanes.appendChild(insert);
```
